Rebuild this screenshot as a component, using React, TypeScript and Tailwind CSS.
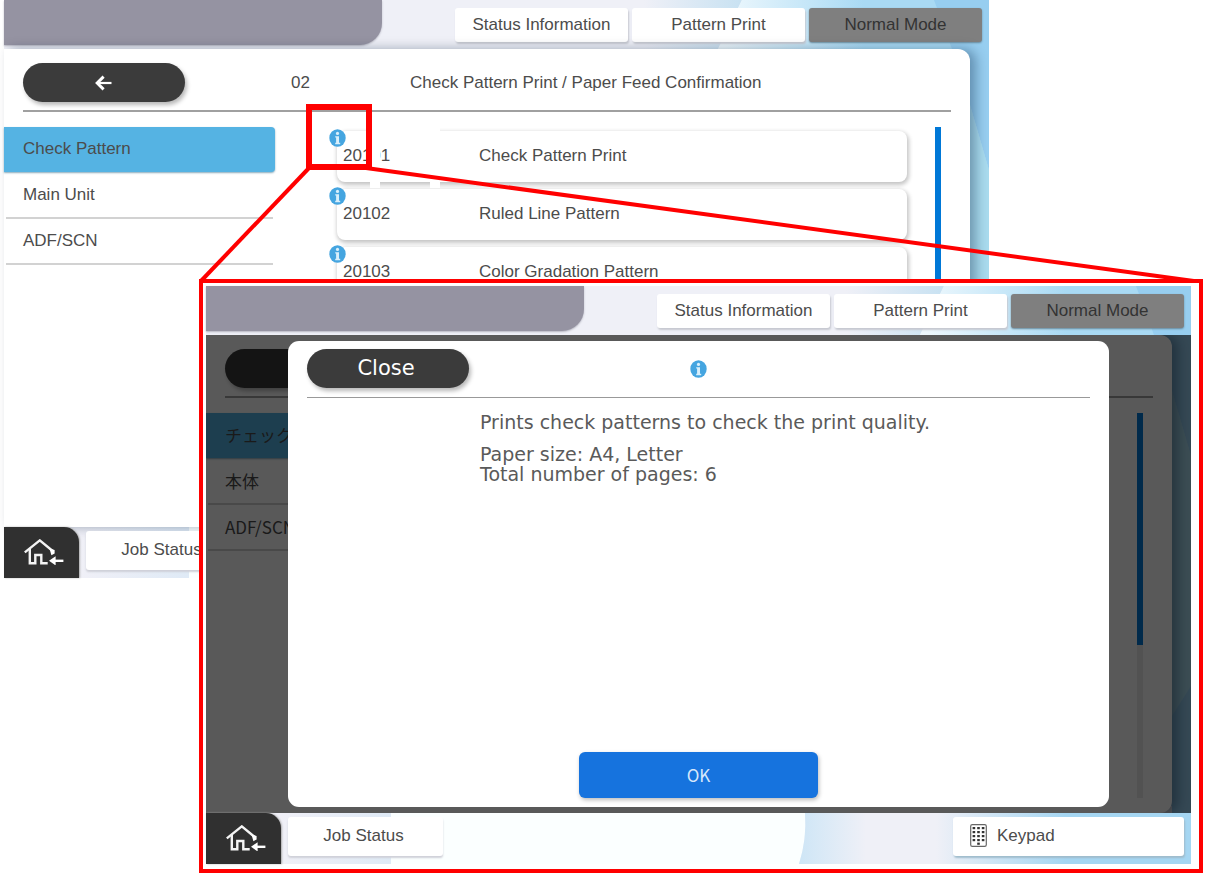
import type { ReactNode } from "react";

type Item = { code: string; name: string };

const ITEMS: Item[] = [
  { code: "20101", name: "Check Pattern Print" },
  { code: "20102", name: "Ruled Line Pattern" },
  { code: "20103", name: "Color Gradation Pattern" },
];

function InfoIcon() {
  return (
    <svg viewBox="0 0 17 18" className="h-[18px] w-[17px]" aria-hidden="true">
      <ellipse cx="8.5" cy="9" rx="8.2" ry="8.8" fill="#45a5e0" />
      <circle cx="8.5" cy="4.4" r="1.6" fill="#d9effb" />
      <path d="M6.2 7.2h3.8v6.6h1.2v1.4H6.2v-1.4h.9V8.6h-.9z" fill="#d9effb" />
    </svg>
  );
}

function HomeIcon() {
  return (
    <svg viewBox="0 0 40 26" className="h-[26px] w-10" fill="none" aria-hidden="true">
      <path d="M.8 13.400 15.800 1.400 29 12.200" stroke="#f4f4f4" strokeWidth="2.4" />
      <path d="M5.800 10v14.200h5.500V16h6v8.200h6.400" stroke="#f4f4f4" strokeWidth="2.4" />
      <path d="M25.500 9.500 30.600 11v3.400l-3.200 1.800z" fill="#fff" />
      <path d="m25 21.800 6.600-4.600v9.200z" fill="#fff" />
      <path d="M30 21.800h9.400" stroke="#fff" strokeWidth="2.4" />
    </svg>
  );
}

function BackIcon() {
  return (
    <svg viewBox="0 0 18 16" className="h-4 w-[18px]" fill="none" stroke="#fff" aria-hidden="true">
      <path d="M2 8h14.5" strokeWidth="2.2" />
      <path d="M8.600 1.600 2.200 8l6.400 6.400" strokeWidth="3" />
    </svg>
  );
}

function KeypadIcon() {
  return (
    <svg viewBox="0 0 17 23" className="h-[23px] w-[17px]" aria-hidden="true">
      <rect x=".7" y=".7" width="15.6" height="21.6" rx="1.6" fill="#fff" stroke="#666" strokeWidth="1.2" />
      {[3, 7, 11, 15].map((y) =>
        [2.6, 7.2, 11.8].map((x) => <rect key={`${x}-${y}`} x={x} y={y} width="2.6" height="2.2" fill="#333" />),
      )}
      <rect x="7.2" y="18.6" width="2.6" height="2.2" fill="#333" />
    </svg>
  );
}

// Pale blue wallpaper that shows behind the bars and right of the panel.
function Wallpaper({ id }: { id: string }) {
  return (
    <svg
      viewBox="0 0 985 578"
      preserveAspectRatio="none"
      className="absolute inset-0 h-full w-full"
      aria-hidden="true"
    >
      <defs>
        <linearGradient id={`${id}-a`} x1="640" x2="735" y1="0" y2="0" gradientUnits="userSpaceOnUse">
          <stop stopColor="#eff0f7" />
          <stop offset="1" stopColor="#c9e2f2" />
        </linearGradient>
        <linearGradient id={`${id}-b`} x1="720" x2="860" y1="0" y2="0" gradientUnits="userSpaceOnUse">
          <stop stopColor="#eef8fd" />
          <stop offset="1" stopColor="#a9daf4" />
        </linearGradient>
        <linearGradient id={`${id}-c`} x1="595" x2="660" y1="0" y2="0" gradientUnits="userSpaceOnUse">
          <stop stopColor="#cfe6f6" />
          <stop offset="1" stopColor="#eff0f7" />
        </linearGradient>
        <linearGradient id={`${id}-d`} x1="730" x2="860" y1="0" y2="0" gradientUnits="userSpaceOnUse">
          <stop stopColor="#eff0f7" />
          <stop offset="1" stopColor="#a5d6f2" />
        </linearGradient>
        <linearGradient id={`${id}-e`} x1="75" x2="185" y1="0" y2="0" gradientUnits="userSpaceOnUse">
          <stop stopColor="#f0f0f7" />
          <stop offset="1" stopColor="#dfeaf6" />
        </linearGradient>
      </defs>
      <path d="M0 0H985V578H0Z" fill="#eff0f7" />
      <path d="M600 0H738L714 49H600z" fill={`url(#${id}-a)`} />
      <path d="M738 0H985V520H900V49H714z" fill={`url(#${id}-b)`} />
      <path d="M930 0H985V170L966 105 948 49z" fill="#97cef0" />
      <path d="M966 105 985 170V400L966 430z" fill="#a9dbee" />
      <path d="M985 400V530H966V430z" fill="#97cef0" />
      <path d="M0 527H185V578H0z" fill={`url(#${id}-e)`} />
      <path d="M185 527H599Q601 553 593 578H185z" fill="#fbffff" />
      <path d="M599 527H730V578H593Q601 553 599 527z" fill={`url(#${id}-c)`} />
      <path d="M730 527H985V578H730z" fill={`url(#${id}-d)`} />
    </svg>
  );
}

function ModeBar() {
  const button = "h-[34px] w-[173px] rounded-[3px] pb-px text-center";
  return (
    <header className="relative flex h-[49px] justify-between pr-[7px]">
      <div className="h-[45px] w-[378px] rounded-br-[22px] bg-[#9593a2] shadow-[0_1px_2px_#b5b5c0]" />
      <nav className="flex gap-1 pt-2">
        <button className={`${button} bg-white shadow-[1px_2px_2px_#c6c8d0]`}>Status Information</button>
        <button className={`${button} bg-white shadow-[1px_2px_2px_#c6c8d0]`}>Pattern Print</button>
        <button className={`${button} bg-[#7f7f7f] text-[#333] shadow-[0_1px_2px_#68889a]`}>Normal Mode</button>
      </nav>
    </header>
  );
}

function JobBar() {
  return (
    <footer className="relative flex h-[51px] items-start justify-between pr-[7px]">
      <div className="flex items-start gap-[7px]">
        <button
          aria-label="Home"
          className="flex h-[51px] w-[75px] items-center justify-center rounded-tr-[15px] bg-[#303030] pb-[2px] pl-1 shadow-[1px_0_2px_#aaa]"
        >
          <HomeIcon />
        </button>
        <button className="mt-1 h-[39px] w-[155px] rounded-[3px] bg-white pr-1 pb-[2px] shadow-[0_2px_2px_#cfd0d8]">
          Job Status
        </button>
      </div>
      <button className="mt-1 flex h-[39px] w-[231px] items-center gap-[10px] rounded-[3px] bg-white pb-[2px] pl-[17px] shadow-[1px_2px_2px_#9fbccc]">
        <KeypadIcon />
        Keypad
      </button>
    </footer>
  );
}

function Pill({ label, children }: { label: string; children: ReactNode }) {
  return (
    <button
      aria-label={label}
      className="flex h-[39px] w-[162px] shrink-0 items-center justify-center rounded-full bg-[#3b3b3b] text-white shadow-[2px_3px_4px_#b8b8b8]"
    >
      {children}
    </button>
  );
}

type PanelProps = { tabs: string[]; items: Item[] };

function PatternPanel({ tabs, items }: PanelProps) {
  return (
    <main className="relative mr-[19px] flex h-[478px] flex-col rounded-r-[12px] bg-white shadow-[6px_0_12px_rgba(0,30,60,0.35)]">
      <div className="mr-[19px] ml-[19px] flex h-[63px] items-start border-b-2 border-[#a0a0a0] pt-[14px]">
        <Pill label="Back">
          <BackIcon />
        </Pill>
        <div className="flex h-[39px] items-center">
          <span className="ml-[106px] w-[119px]">02</span>
          <h1>Check Pattern Print / Paper Feed Confirmation</h1>
        </div>
      </div>
      <div className="flex min-h-0 flex-1 pt-[15px]">
        <nav className="w-[271px]">
          {tabs.map((tab, i) => (
            <button
              key={tab}
              className={
                i === 0
                  ? "mb-px h-[45px] w-full rounded-r-[4px] bg-[#55b3e3] pb-[2px] pl-[19px] text-left shadow-[0_1px_2px_#8ab]"
                  : "mx-[2px] h-[46px] w-[267px] border-b-2 border-[#d2d2d2] pl-[17px] text-left"
              }
            >
              {tab}
            </button>
          ))}
        </nav>
        <div className="ml-[62px] flex flex-1 flex-col gap-[7px] pt-1">
          {items.map((item) => (
            <button
              key={item.code}
              className="relative flex h-[51px] items-center rounded-[8px] bg-white pb-[2px] pl-[6px] text-left shadow-[1px_2px_4px_1px_#c4c4c4]"
            >
              <span className="absolute -top-[2px] -left-2">
                <InfoIcon />
              </span>
              <span className="w-[136px]">{item.code}</span>
              {item.name}
            </button>
          ))}
        </div>
        <div className="mr-[29px] ml-7 h-[385px] w-[6px] bg-[#ececec]">
          <div className="h-[232px] bg-[#0078d7]" />
        </div>
      </div>
    </main>
  );
}

function HelpDialog() {
  return (
    <section
      role="dialog"
      aria-label="Check Pattern Print"
      className="absolute inset-x-[82px] inset-y-[6px] flex flex-col items-center rounded-[11px] bg-white font-['DejaVu_Sans',sans-serif]"
    >
      <div className="flex w-full flex-col px-[19px] pt-2">
        <div className="grid h-[49px] grid-cols-[1fr_auto_1fr] items-start border-b border-[#999]">
          <Pill label="Close">
            <span className="pr-1 text-[21px]">Close</span>
          </Pill>
          <span className="flex h-10 items-center">
            <InfoIcon />
          </span>
        </div>
        <div className="pt-[14px] pl-[173px] text-[19px] leading-[20px] text-[#5a5a5a]">
          <p>Prints check patterns to check the print quality.</p>
          <p className="pt-3">Paper size: A4, Letter</p>
          <p>Total number of pages: 6</p>
        </div>
      </div>
      <button className="mt-auto mb-[9px] h-[46px] w-[239px] rounded-[6px] bg-[#1673de] font-['Noto_Sans_CJK_JP',sans-serif] text-[#d5e7fb] shadow-[1px_2px_4px_#bbb]">
        OK
      </button>
    </section>
  );
}

// Red box round the info icon, and the two lines that lead to the enlarged view.
function Callout() {
  return (
    <svg className="pointer-events-none absolute top-0 left-0 h-[290px] w-full" aria-hidden="true">
      <rect x="370" y="126" width="70" height="6" fill="#fff" />
      <rect x="370" y="130" width="10" height="58" fill="#fff" />
      <rect x="430" y="130" width="10" height="58" fill="#fff" />
      <g fill="none" stroke="#f00">
        <rect x="309" y="107" width="60" height="60" strokeWidth="6" />
        <line x1="309" y1="168" x2="201" y2="281" strokeWidth="4" />
        <line x1="366" y1="168" x2="99.600%" y2="282" strokeWidth="4" />
      </g>
    </svg>
  );
}

export default function App() {
  return (
    <div className="relative overflow-hidden bg-white font-['Liberation_Sans','Noto_Sans_CJK_JP',sans-serif] text-[17px] text-[#4c4c4c]">
      <div className="relative mr-[217px] ml-1">
        <Wallpaper id="base" />
        <ModeBar />
        <PatternPanel tabs={["Check Pattern", "Main Unit", "ADF/SCN"]} items={ITEMS} />
        <JobBar />
      </div>
      <Callout />
      <div className="relative -mt-[299px] mr-[3px] ml-[199px] border-4 border-[#f00] bg-white pt-[3px] pr-2 pb-[5px] pl-[3px]">
        <div className="relative">
          <Wallpaper id="zoom" />
          <ModeBar />
          <div className="relative overflow-hidden">
            <div className="font-['Noto_Sans_CJK_JP',sans-serif]">
              <PatternPanel tabs={["チェックパターン", "本体", "ADF/SCN"]} items={[]} />
            </div>
            <div className="absolute inset-0 bg-black/65" />
            <HelpDialog />
          </div>
          <JobBar />
        </div>
      </div>
    </div>
  );
}
